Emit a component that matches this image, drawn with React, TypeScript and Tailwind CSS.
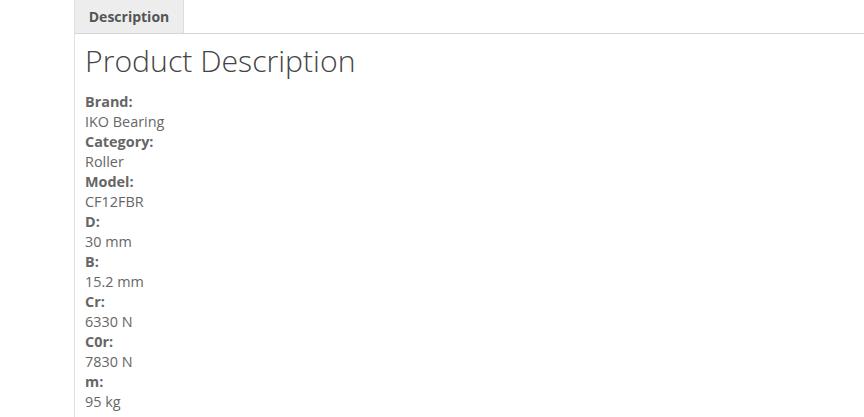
export default function App() {
  const specs: [string, string][] = [
    ["Brand:", "IKO Bearing"],
    ["Category:", "Roller"],
    ["Model:", "CF12FBR"],
    ["D:", "30 mm"],
    ["B:", "15.2 mm"],
    ["Cr:", "6330 N"],
    ["C0r:", "7830 N"],
    ["m:", "95 kg"],
  ];
  return (
    <div className="h-[417px] w-[864px] overflow-hidden bg-white pl-[74px] font-['Open_Sans',sans-serif]">
      <div className="h-full border-l border-[#e0e0e0]">
        <div className="flex h-[34px] border-b border-[#d6d6d6]">
          <div className="flex h-[33px] w-[109px] items-center justify-center border-r border-[#dcdcdc] bg-[#ededed] pb-[1px] text-[14px] font-bold text-[#555]">
            Description
          </div>
        </div>
        <div className="px-[10px] pt-[7px]">
          <h2 className="text-[30.2px] font-light leading-[40px] text-[#444]">Product Description</h2>
          <div className="mt-[11px] text-[14.4px] leading-[20px] text-[#666]">
            {specs.map(([k, v]) => (
              <div key={k}>
                <div className="font-bold text-[#666]">{k}</div>
                <div>{v}</div>
              </div>
            ))}
          </div>
        </div>
      </div>
    </div>
  );
}
